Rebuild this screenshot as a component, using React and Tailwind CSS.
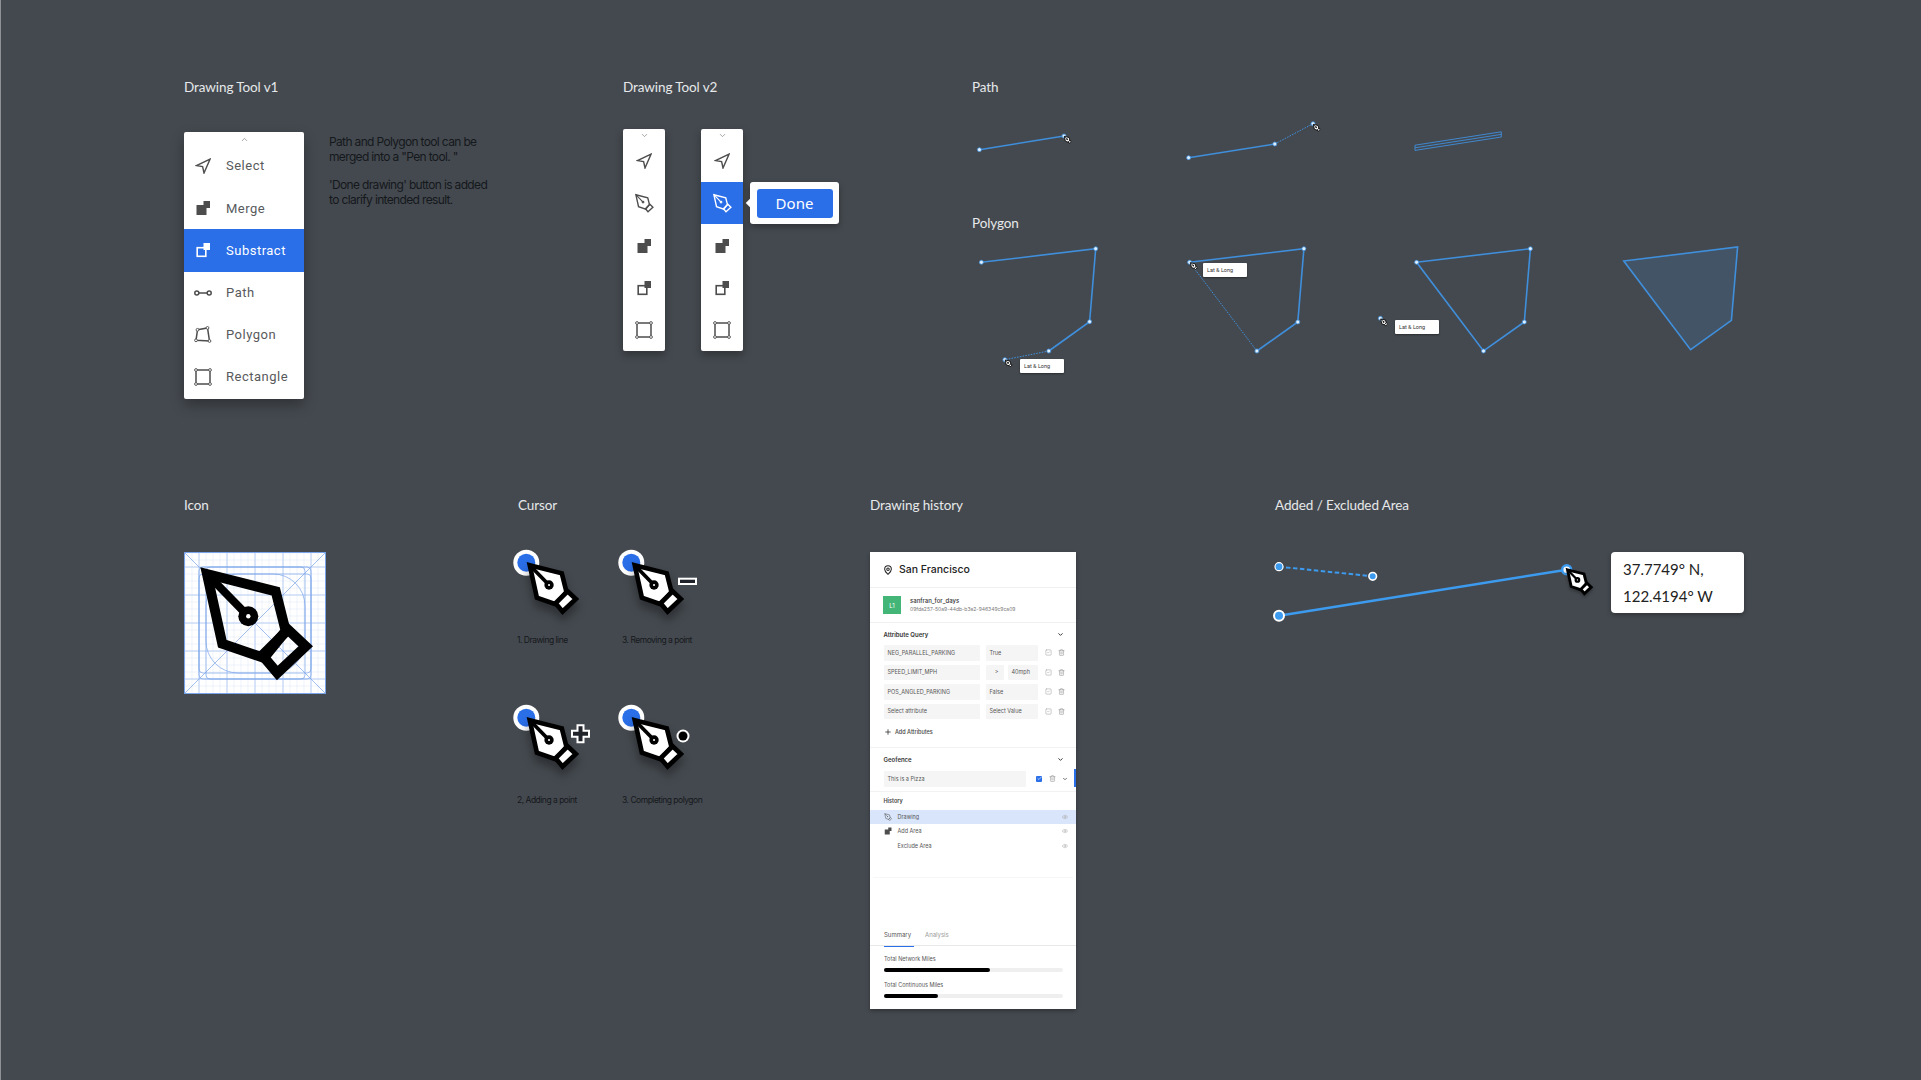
import { ChevronDown, ChevronUp, Eye, MapPin, Plus, SquareCheck, Trash2, Check } from 'lucide-react'

const lineBlue = '#3f8fdc'

function Title({ children }) {
  return <h2 className="h-[18px] text-[13.5px] leading-[18px] font-normal tracking-[-0.1px] text-[#e6e8ea] font-['Lato',sans-serif]">{children}</h2>
}

// pen nib drawn on a 142 box, same shape as the big icon
function PenShape({ fill = 'none', stroke = '#000', sw = 10, dot = '#fff' }) {
  return (
    <g strokeLinejoin="miter" strokeLinecap="butt">
      <path d="M23 22 L91.7 39.3 L101.7 79 L80 106 L38.3 91.7 Z" fill={fill} stroke={stroke} strokeWidth={sw} />
      <path d="M104 77.7 L121.7 94.3 L93.3 121 L78.3 103.3 Z" fill={fill} stroke={stroke} strokeWidth={sw} />
      <path d="M23 22 L64.3 64.3" stroke={stroke} strokeWidth={sw * 0.8} />
      <circle cx="64.3" cy="64.3" r={sw} fill={stroke} />
      <circle cx="64.3" cy="64.3" r={sw * 0.22} fill={dot} />
    </g>
  )
}

function PenIcon({ stroke = '#4d4d4d', fill = 'none', dot = '#fff' }) {
  return (
    <svg width="20" height="20" viewBox="12 12 116 116">
      <PenShape stroke={stroke} fill={fill} sw={8} dot={dot} />
    </svg>
  )
}

function SelectIcon() {
  return (
    <svg width="16" height="16" viewBox="0 0 16 16" fill="none" stroke="#4d4d4d" strokeWidth="1.4" strokeLinejoin="miter">
      <path d="M15 1.2 L1.5 7.6 L7.6 8.6 L9 15 Z" />
    </svg>
  )
}

function MergeIcon() {
  return (
    <svg width="16" height="16" viewBox="0 0 16 16" fill="#4d4d4d">
      <rect x="1.5" y="5" width="10" height="10" />
      <rect x="8.5" y="1" width="6.5" height="7" />
    </svg>
  )
}

function SubtractIcon({ color = '#4d4d4d' }) {
  return (
    <svg width="16" height="16" viewBox="0 0 16 16">
      <rect x="2.2" y="5.7" width="8.6" height="8.6" fill="none" stroke={color} strokeWidth="1.6" />
      <rect x="8.5" y="1" width="6.5" height="7" fill={color} />
    </svg>
  )
}

function PathIcon() {
  return (
    <svg width="18" height="16" viewBox="0 0 18 16" fill="none" stroke="#4d4d4d" strokeWidth="1.5">
      <circle cx="2.8" cy="8" r="2" />
      <circle cx="15.2" cy="8" r="2" />
      <path d="M5 8 H13" />
    </svg>
  )
}

function PolygonIcon() {
  return (
    <svg width="18" height="18" viewBox="0 0 18 18" fill="none" stroke="#4d4d4d" strokeWidth="0.9">
      <path d="M3.5 3.8 L13.5 1.9 L15.5 15 L2 14.3 Z" strokeWidth="1.5" />
      <circle cx="3.5" cy="3.8" r="1.4" fill="#fff" />
      <circle cx="13.5" cy="1.9" r="1.4" fill="#fff" />
      <circle cx="15.5" cy="15" r="1.4" fill="#fff" />
      <circle cx="2" cy="14.3" r="1.4" fill="#fff" />
    </svg>
  )
}

function RectIcon() {
  return (
    <svg width="18" height="18" viewBox="0 0 18 18" fill="none" stroke="#4d4d4d" strokeWidth="0.9">
      <rect x="2" y="2" width="14" height="14" strokeWidth="1.5" />
      <circle cx="2" cy="2" r="1.4" fill="#fff" />
      <circle cx="16" cy="2" r="1.4" fill="#fff" />
      <circle cx="2" cy="16" r="1.4" fill="#fff" />
      <circle cx="16" cy="16" r="1.4" fill="#fff" />
    </svg>
  )
}

function MenuRow({ icon, label, active }) {
  return (
    <div className={`flex h-[42.2px] items-center pl-[10px] ${active ? 'bg-[#2a6ee8] text-white' : 'text-[#585a5c]'}`}>
      <span className="flex w-[18px] justify-center">{icon}</span>
      <span className="ml-[14px] font-['Roboto',sans-serif] text-[13px] tracking-[0.5px]">{label}</span>
    </div>
  )
}

function DrawingToolV1() {
  return (
    <div className="w-[439px]">
      <Title>Drawing Tool v1</Title>
      <div className="mt-[36px] flex gap-[25px]">
        <div className="h-[267px] w-[120px] rounded-[2px] bg-white shadow-[0_6px_14px_rgba(0,0,0,0.3)]">
          <div className="flex h-[13px] items-center justify-center pt-[2px]">
            <ChevronUp size={9} color="#8a8a8a" />
          </div>
          <MenuRow icon={<SelectIcon />} label="Select" />
          <MenuRow icon={<MergeIcon />} label="Merge" />
          <MenuRow icon={<SubtractIcon color="#fff" />} label="Substract" active />
          <MenuRow icon={<PathIcon />} label="Path" />
          <MenuRow icon={<PolygonIcon />} label="Polygon" />
          <MenuRow icon={<RectIcon />} label="Rectangle" />
        </div>
        <div className="pt-[2px] font-['Inter',sans-serif] text-[12px] leading-[15px] tracking-[-0.65px] text-[#15181c]">
          <p>Path and Polygon tool can be<br />merged into a "Pen tool. "</p>
          <p className="mt-[13px]">'Done drawing' button is added<br />to clarify intended result.</p>
        </div>
      </div>
    </div>
  )
}

function Toolbar({ active, children }) {
  return (
    <div className="relative h-[222px] w-[42px] rounded-[2px] bg-white shadow-[0_4px_8px_rgba(0,0,0,0.3)]">
      <div className="flex h-[10px] items-center justify-center pt-[2px]">
        <ChevronDown size={9} color="#8a8a8a" />
      </div>
      <div className="flex h-[43px] items-center justify-center pt-[1px]"><SelectIcon /></div>
      <div className={`flex h-[42px] items-center justify-center ${active ? 'bg-[#2a6ee8]' : ''}`}>
        {active ? <PenIcon stroke="#fff" dot="#2a6ee8" /> : <PenIcon />}
      </div>
      <div className="flex h-[43px] items-center justify-center"><MergeIcon /></div>
      <div className="flex h-[42px] items-center justify-center"><SubtractIcon /></div>
      <div className="flex h-[42px] items-center justify-center"><RectIcon /></div>
      {children}
    </div>
  )
}

function DrawingToolV2() {
  return (
    <div className="w-[349px]">
      <Title>Drawing Tool v2</Title>
      <div className="mt-[33px] flex gap-[36px]">
        <Toolbar />
        <Toolbar active>
          <div className="absolute left-[49px] top-[53px] flex h-[42px] w-[89px] items-center justify-center rounded-[3px] bg-white shadow-[0_3px_6px_rgba(0,0,0,0.3)]">
            <span className="absolute left-[-3px] top-[18px] h-[6px] w-[6px] rotate-45 bg-white" />
            <button className="h-[29px] w-[76px] rounded-[3px] bg-[#2a6ee8] font-['Noto_Sans',sans-serif] text-[15px] text-white">Done</button>
          </div>
        </Toolbar>
      </div>
    </div>
  )
}

function Node({ x, y }) {
  return <circle cx={x} cy={y} r="2" fill="#dff0ff" stroke={lineBlue} strokeWidth="0.8" />
}

function SmallPen({ x, y }) {
  return (
    <g transform={`translate(${x - 0.7} ${y - 0.7}) scale(0.07)`}>
      <PenShape fill="#fff" stroke="#000" sw={12} />
    </g>
  )
}

function Poly({ pts, dotted, closed, fill = 'none' }) {
  const d = pts.map((p, i) => `${i ? 'L' : 'M'}${p[0]} ${p[1]}`).join(' ')
  return (
    <path
      d={closed ? d + ' Z' : d}
      fill={fill}
      stroke={lineBlue}
      strokeWidth={dotted ? 1 : 1.6}
      strokeDasharray={dotted ? '1.6 1.2' : undefined}
    />
  )
}

function LatLong({ className }) {
  return (
    <div className={`absolute flex h-[14px] w-[44px] items-center rounded-[1px] bg-white pl-[4px] font-['Roboto',sans-serif] text-[5.5px] text-[#333] shadow-[0_1px_2px_rgba(0,0,0,0.4)] ${className}`}>
      Lat &amp; Long
    </div>
  )
}

function PathPolygon() {
  return (
    <div className="flex-1">
      <Title>Path</Title>
      <svg width="800" height="118" viewBox="972 96 800 118" className="block">
        <Poly pts={[[979.4, 149.7], [1064, 136]]} />
        <Node x={979.4} y={149.7} />
        <Node x={1064} y={136} />
        <SmallPen x={1063.4} y={135.5} />
        <Poly pts={[[1188.6, 157.7], [1274.8, 144]]} />
        <Poly pts={[[1274.8, 144], [1313, 123.7]]} dotted />
        <Node x={1188.6} y={157.7} />
        <Node x={1274.8} y={144} />
        <Node x={1313} y={123.7} />
        <SmallPen x={1312.4} y={123.5} />
        <path d="M1415 145.2 L1501.3 131.8 V137 L1415 150.4 Z M1415 147.8 L1501.3 134.4" fill="none" stroke={lineBlue} strokeWidth="0.9" />
      </svg>
      <Title>Polygon</Title>
      <div className="relative">
        <svg width="800" height="168" viewBox="972 232 800 168" className="block">
          <Poly pts={[[981.4, 262.3], [1095.7, 248.7], [1089.6, 321.7], [1048.8, 351]]} />
          <Poly pts={[[1048.8, 351], [1004.9, 359.7]]} dotted />
          <Node x={981.4} y={262.3} />
          <Node x={1095.7} y={248.7} />
          <Node x={1089.6} y={321.7} />
          <Node x={1048.8} y={351} />
          <Node x={1004.9} y={359.7} />
          <SmallPen x={1004.3} y={359.1} />

          <Poly pts={[[1189.6, 262.3], [1303.9, 248.7], [1297.8, 322], [1256.9, 351]]} />
          <Poly pts={[[1256.9, 351], [1189.6, 262.3]]} dotted />
          <Node x={1303.9} y={248.7} />
          <Node x={1297.8} y={322} />
          <Node x={1256.9} y={351} />
          <Node x={1189.6} y={262.3} />
          <SmallPen x={1189.5} y={261.8} />

          <Poly pts={[[1416.6, 262.3], [1530.4, 248.7], [1524.3, 322], [1483.5, 351]]} closed />
          <Node x={1416.6} y={262.3} />
          <Node x={1530.4} y={248.7} />
          <Node x={1524.3} y={322} />
          <Node x={1483.5} y={351} />
          <Node x={1380.4} y={318.3} />
          <SmallPen x={1379.8} y={318.1} />

          <Poly pts={[[1623.8, 261], [1737.6, 247], [1731.4, 320.3], [1690.6, 349.7]]} closed fill="rgba(63,143,220,0.17)" />
        </svg>
        <LatLong className="left-[48px] top-[127px]" />
        <LatLong className="left-[231px] top-[31px]" />
        <LatLong className="left-[423px] top-[88px]" />
      </div>
    </div>
  )
}

function IconGrid() {
  const light = Array.from({ length: 20 }, (_, i) => 1 + i * 7)
  const heavy = [15, 43, 71, 99, 127]
  return (
    <div className="w-[334px]">
      <Title>Icon</Title>
      <svg width="142" height="142" viewBox="0 0 142 142" className="mt-[38px] block bg-white">
        {light.map((v) => (
          <g key={v} stroke="#e3ebf9" strokeWidth="0.6">
            <path d={`M${v} 0 V142`} />
            <path d={`M0 ${v} H142`} />
          </g>
        ))}
        {heavy.map((v) => (
          <g key={v} stroke="#adc7f2" strokeWidth="0.8">
            <path d={`M${v} 0 V142`} />
            <path d={`M0 ${v} H142`} />
          </g>
        ))}
        <g fill="none" stroke="#7aa4ea" strokeWidth="0.7">
          <path d="M0 0 L142 142 M142 0 L0 142" />
          <rect x="0.5" y="0.5" width="141" height="141" strokeWidth="1" />
          <rect x="15" y="15" width="112" height="112" rx="4" />
          <rect x="22" y="15" width="99" height="112" rx="4" />
          <rect x="15" y="22" width="112" height="99" rx="4" />
          <rect x="22" y="22" width="99" height="99" rx="32" />
        </g>
        <PenShape />
      </svg>
    </div>
  )
}

function CursorArt({ extra }) {
  return (
    <svg width="100" height="80" viewBox="0 0 100 80" className="block overflow-visible">
      <circle cx="14.3" cy="14.7" r="13" fill="#fff" />
      <circle cx="14.3" cy="14.7" r="9" fill="#2a6ee8" />
      <g transform="translate(7 7) scale(0.467)" style={{ filter: 'drop-shadow(0 14px 10px rgba(0,0,0,0.35))' }}>
        <PenShape fill="#fff" sw={10} dot="#fff" />
      </g>
      {extra}
    </svg>
  )
}

function CursorLabel({ children, className }) {
  return <p className={`h-[12px] pl-[5px] font-['Inter',sans-serif] text-[8.5px] leading-[12px] tracking-[-0.5px] text-[#15181c] ${className}`}>{children}</p>
}

function Cursors() {
  return (
    <div className="w-[352px]">
      <Title>Cursor</Title>
      <div className="mt-[34px] ml-[-6px] grid w-[210px] grid-cols-[105px_105px] gap-y-[57px]">
        <div>
          <CursorArt />
          <CursorLabel className="mt-[6px]">1. Drawing line</CursorLabel>
        </div>
        <div>
          <CursorArt extra={<rect x="62" y="30.7" width="17" height="5.3" fill="#20242a" stroke="#fff" strokeWidth="2" />} />
          <CursorLabel className="mt-[6px]">3. Removing a point</CursorLabel>
        </div>
        <div>
          <CursorArt
            extra={
              <path
                d="M65.5 22.3 h6 v5.5 h5.5 v6 h-5.5 v5.5 h-6 v-5.5 h-5.5 v-6 h5.5 Z"
                fill="#20242a"
                stroke="#fff"
                strokeWidth="2"
              />
            }
          />
          <CursorLabel className="mt-[11px]">2, Adding a point</CursorLabel>
        </div>
        <div>
          <CursorArt
            extra={
              <g>
                <circle cx="66" cy="33" r="6.5" fill="#fff" />
                <circle cx="66" cy="33" r="4.5" fill="#000" />
              </g>
            }
          />
          <CursorLabel className="mt-[11px]">3. Completing polygon</CursorLabel>
        </div>
      </div>
    </div>
  )
}

const attrRows = [
  { name: 'NEG_PARALLEL_PARKING', value: 'True' },
  { name: 'SPEED_LIMIT_MPH', op: '>', value: '40mph' },
  { name: 'POS_ANGLED_PARKING', value: 'False' },
  { name: 'Select attribute', value: 'Select Value' },
]

const historyRows = [
  { label: 'Drawing', icon: <PenIcon stroke="#555" />, active: true },
  { label: 'Add Area', icon: <MergeIcon /> },
  { label: 'Exclude Area' },
]

function Field({ children, className }) {
  return <div className={`flex h-[15.5px] items-center rounded-[1px] bg-[#f5f5f5] pl-[4px] text-[5.5px] text-[#555] ${className}`}>{children}</div>
}

function AttrRow({ row }) {
  return (
    <div className="flex items-center">
      <Field className="w-[96px]">{row.name}</Field>
      {row.op ? (
        <div className="ml-[6px] flex w-[52.5px] gap-[4px]">
          <Field className="w-[18px] justify-center pl-0">{row.op}</Field>
          <Field className="flex-1">{row.value}</Field>
        </div>
      ) : (
        <Field className="ml-[6px] w-[52.5px]">{row.value}</Field>
      )}
      <SquareCheck size={7} color="#a8a8a8" className="ml-[7px]" />
      <Trash2 size={7} color="#9a9a9a" className="ml-[6px]" />
    </div>
  )
}

function Meter({ label, pct, className }) {
  return (
    <div className={className}>
      <p className="h-[7px] text-[5.5px] leading-[7px] text-[#555]">{label}</p>
      <div className="mt-[5px] h-[4px] w-[179px] rounded-full bg-[#efefef]">
        <div className="h-[4px] rounded-full bg-black" style={{ width: `${pct}%` }} />
      </div>
    </div>
  )
}

function HistoryPanel() {
  return (
    <div className="w-[405px]">
      <Title>Drawing history</Title>
      <div className="mt-[38px] h-[457px] w-[206px] bg-white font-['Inter',sans-serif] shadow-[0_2px_4px_rgba(0,0,0,0.3)]">
        <div className="flex h-[36px] items-center border-b border-[#f0f0f0] pl-[13px]">
          <MapPin size={10} color="#222" strokeWidth={2.5} />
          <span className="ml-[6px] text-[10.5px] font-medium text-[#222]">San Francisco</span>
        </div>
        <div className="flex h-[35px] items-center border-b border-[#f0f0f0] pl-[13px]">
          <div className="flex h-[18px] w-[18px] items-center justify-center bg-[#42b577] text-[6px] text-white">L1</div>
          <div className="ml-[9px]">
            <p className="text-[6px] leading-[8px] font-medium text-[#333]">sanfran_for_days</p>
            <p className="text-[5px] leading-[8px] text-[#777]">09fda257-50a9-44db-b3a2-946349c9ca09</p>
          </div>
        </div>
        <div className="h-[125px] border-b border-[#f2f2f2] pl-[13.5px]">
          <div className="flex h-[22px] items-center justify-between pr-[12px]">
            <span className="text-[6px] font-semibold text-[#333]">Attribute Query</span>
            <ChevronDown size={7} color="#222" strokeWidth={3} />
          </div>
          <div className="flex flex-col gap-[4px]">
            {attrRows.map((row) => (
              <AttrRow key={row.name} row={row} />
            ))}
          </div>
          <div className="mt-[6px] flex h-[14px] items-center">
            <Plus size={8} color="#111" />
            <span className="ml-[3.5px] text-[5.5px] font-medium text-[#444]">Add Attributes</span>
          </div>
        </div>
        <div className="relative h-[44px] border-b border-[#f2f2f2] pl-[13.5px]">
          <div className="flex h-[23px] items-center justify-between pr-[12px]">
            <span className="text-[6px] font-semibold text-[#333]">Geofence</span>
            <ChevronDown size={7} color="#222" strokeWidth={3} />
          </div>
          <div className="flex items-center">
            <Field className="w-[142px]">This is a Pizza</Field>
            <span className="ml-[10.5px] flex h-[6px] w-[6px] items-center justify-center rounded-[1px] bg-[#2a6ee8]">
              <Check size={5} color="#fff" strokeWidth={3} />
            </span>
            <Trash2 size={7} color="#9a9a9a" className="ml-[7px]" />
            <ChevronDown size={6} color="#444" strokeWidth={3} className="ml-[5.5px]" />
          </div>
          <span className="absolute right-0 top-[21px] h-[18px] w-[2px] bg-[#2a6ee8]" />
        </div>
        <div className="flex h-[17.5px] items-center pl-[13.5px] text-[5.5px] font-semibold text-[#444]">History</div>
        {historyRows.map((row) => (
          <div key={row.label} className={`flex h-[14.5px] items-center pr-[8px] pl-[13px] ${row.active ? 'bg-[#d9e5fb]' : ''}`}>
            <span className="flex w-[9px] justify-center [&>svg]:h-[8px] [&>svg]:w-[8px]">{row.icon}</span>
            <span className="ml-[5.5px] flex-1 text-[5.5px] text-[#555]">{row.label}</span>
            <Eye size={6} color="#aaa" />
          </div>
        ))}
        <div className="mx-[3px] mt-[24px] border-b border-[#f7f7f7]" />
        <div className="mt-[48px] flex h-[20px] items-start gap-[11px] border-b border-[#e8e8e8] pl-[14px] text-[6px] leading-[17px]">
          <span className="relative h-[20px] w-[30px] text-[#555]">
            Summary
            <span className="absolute bottom-[-1px] left-0 h-[1.5px] w-[30px] bg-[#2a6ee8]" />
          </span>
          <span className="text-[#999]">Analysis</span>
        </div>
        <div className="pl-[14px]">
          <Meter label="Total Network Miles" pct={59} className="pt-[10px]" />
          <Meter label="Total Continuous Miles" pct={30} className="pt-[10px]" />
        </div>
      </div>
    </div>
  )
}

function AddedArea() {
  return (
    <div className="flex-1">
      <Title>Added / Excluded Area</Title>
      <div className="relative">
        <svg width="320" height="110" viewBox="1275 514 320 110" className="block overflow-visible">
          <path d="M1279 566.7 L1372.7 576.3" stroke="#3d9bef" strokeWidth="2" strokeDasharray="4.5 2.5" />
          <path d="M1279 615.7 L1566.7 569.7" stroke="#3d9bef" strokeWidth="2.4" />
          <circle cx="1279" cy="566.7" r="4" fill="#3d9bef" stroke="#fff" strokeWidth="1.2" />
          <circle cx="1372.7" cy="576.3" r="3.8" fill="#3d9bef" stroke="#fff" strokeWidth="1.6" />
          <circle cx="1279" cy="615.7" r="5" fill="#3d9bef" stroke="#fff" strokeWidth="2" />
          <circle cx="1566.7" cy="569.7" r="4.5" fill="#fff" stroke="#3d9bef" strokeWidth="2.5" />
          <g transform="translate(1562 564.5) scale(0.24)" style={{ filter: 'drop-shadow(0 8px 6px rgba(0,0,0,0.3))' }}>
            <PenShape fill="#fff" sw={12} />
          </g>
        </svg>
        <div className="absolute left-[336px] top-[38px] h-[61px] w-[133px] rounded-[4px] bg-white pt-[4px] pl-[12px] font-['Lato',sans-serif] text-[15px] leading-[27px] text-[#222] shadow-[0_2px_5px_rgba(0,0,0,0.3)]">
          <p>37.7749° N,</p>
          <p>122.4194° W</p>
        </div>
      </div>
    </div>
  )
}

export default function App() {
  return (
    <div className="h-[1080px] w-[1921px] overflow-hidden border-l border-[#8f9397] bg-[#44494f] pt-[78px] pl-[183px]">
      <div className="flex h-[418px]">
        <DrawingToolV1 />
        <DrawingToolV2 />
        <PathPolygon />
      </div>
      <div className="flex">
        <IconGrid />
        <Cursors />
        <HistoryPanel />
        <AddedArea />
      </div>
    </div>
  )
}
